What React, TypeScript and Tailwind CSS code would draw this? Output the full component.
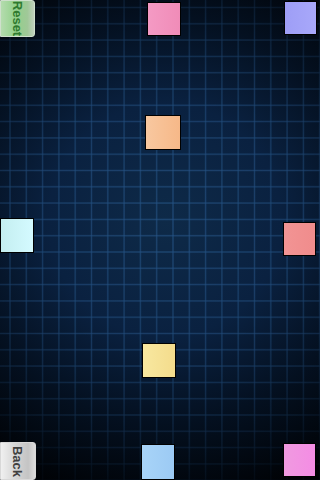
import React from "react";

const STEP = 16.3;

function Backdrop() {
  const vs = Array.from({ length: 20 }, (_, i) => 10 + i * STEP);
  const hs = Array.from({ length: 30 }, (_, i) => 7.5 + i * STEP);
  return (
    <svg className="absolute inset-0" width="320" height="480" viewBox="0 0 320 480">
      <defs>
        <radialGradient id="bg" cx="165" cy="220" r="290" gradientUnits="userSpaceOnUse">
          <stop offset="0" stopColor="#0e2a48" />
          <stop offset="0.4" stopColor="#0a2140" />
          <stop offset="0.7" stopColor="#041020" />
          <stop offset="1" stopColor="#000205" />
        </radialGradient>
        <radialGradient id="fade" cx="165" cy="220" r="280" gradientUnits="userSpaceOnUse">
          <stop offset="0" stopColor="#fff" stopOpacity="1" />
          <stop offset="0.5" stopColor="#fff" stopOpacity="0.75" />
          <stop offset="1" stopColor="#fff" stopOpacity="0.1" />
        </radialGradient>
        <mask id="m">
          <rect width="320" height="480" fill="url(#fade)" />
        </mask>
      </defs>
      <rect width="320" height="480" fill="url(#bg)" />
      <g mask="url(#m)">
        {vs.map((x) => (
          <g key={"v" + x}>
            <line x1={x} y1="0" x2={x} y2="480" stroke="#23507f" strokeWidth="2" strokeOpacity="0.35" />
            <line x1={x} y1="0" x2={x} y2="480" stroke="#2f5f96" strokeWidth="0.8" strokeOpacity="0.5" />
          </g>
        ))}
        {hs.map((y) => (
          <g key={"h" + y}>
            <line x1="0" y1={y} x2="320" y2={y} stroke="#23507f" strokeWidth="2" strokeOpacity="0.35" />
            <line x1="0" y1={y} x2="320" y2={y} stroke="#2f5f96" strokeWidth="0.8" strokeOpacity="0.5" />
          </g>
        ))}
      </g>
    </svg>
  );
}

export default function App() {
  return (
    <div className="relative w-[320px] h-[480px] overflow-hidden bg-[#020710] font-['Liberation_Sans',Arial,sans-serif]">
      <Backdrop />

      {/* Reset button */}
      <div className="absolute left-0 top-0 w-[35px] h-[37px] rounded-r-[3px] border border-[#cfe0cc] bg-[linear-gradient(to_right,#b4dcae,#92d08a_45%,#a0c898_80%,#c0d0bc)] flex items-center justify-center">
        <span className="block rotate-90 text-[13px] font-bold text-[#2f7a2f] leading-none whitespace-nowrap">Reset</span>
      </div>

      {/* Back button */}
      <div className="absolute left-0 top-[442px] w-[36px] h-[38px] rounded-r-[3px] border border-[#d8d8d8] bg-[linear-gradient(to_right,#f0f0f0,#d4d4d4_45%,#c4c4c4_80%,#dcdcdc)] flex items-center justify-center">
        <span className="block rotate-90 text-[13px] font-bold text-[#404040] leading-none whitespace-nowrap">Back</span>
      </div>

      {/* Squares */}
      <div className="absolute left-[147px] top-[2px] w-[34px] h-[34px] border border-black bg-[linear-gradient(to_right,#f49ac4,#f08cb8)]" />
      <div className="absolute left-[284px] top-[1px] w-[33px] h-[34px] border border-black bg-[linear-gradient(to_right,#9e9ef6,#a8a8fa)]" />
      <div className="absolute left-[145px] top-[115px] w-[36px] h-[35px] border border-black bg-[linear-gradient(to_right,#f8c8a0,#f6b888)]" />
      <div className="absolute left-0 top-[218px] w-[34px] h-[35px] border border-black bg-[linear-gradient(to_right,#c4eef0,#d4faff)]" />
      <div className="absolute left-[283px] top-[222px] w-[33px] h-[34px] border border-black bg-[linear-gradient(to_right,#f29494,#f08c8c)]" />
      <div className="absolute left-[142px] top-[343px] w-[34px] h-[35px] border border-black bg-[linear-gradient(to_right,#f8e8a0,#f4dc8c)]" />
      <div className="absolute left-[141px] top-[444px] w-[34px] h-[36px] border border-black bg-[linear-gradient(to_right,#a8d4f8,#9ccaf4)]" />
      <div className="absolute left-[283px] top-[443px] w-[33px] h-[34px] border border-black bg-[linear-gradient(to_right,#f09ae0,#f48ce4)]" />
    </div>
  );
}
